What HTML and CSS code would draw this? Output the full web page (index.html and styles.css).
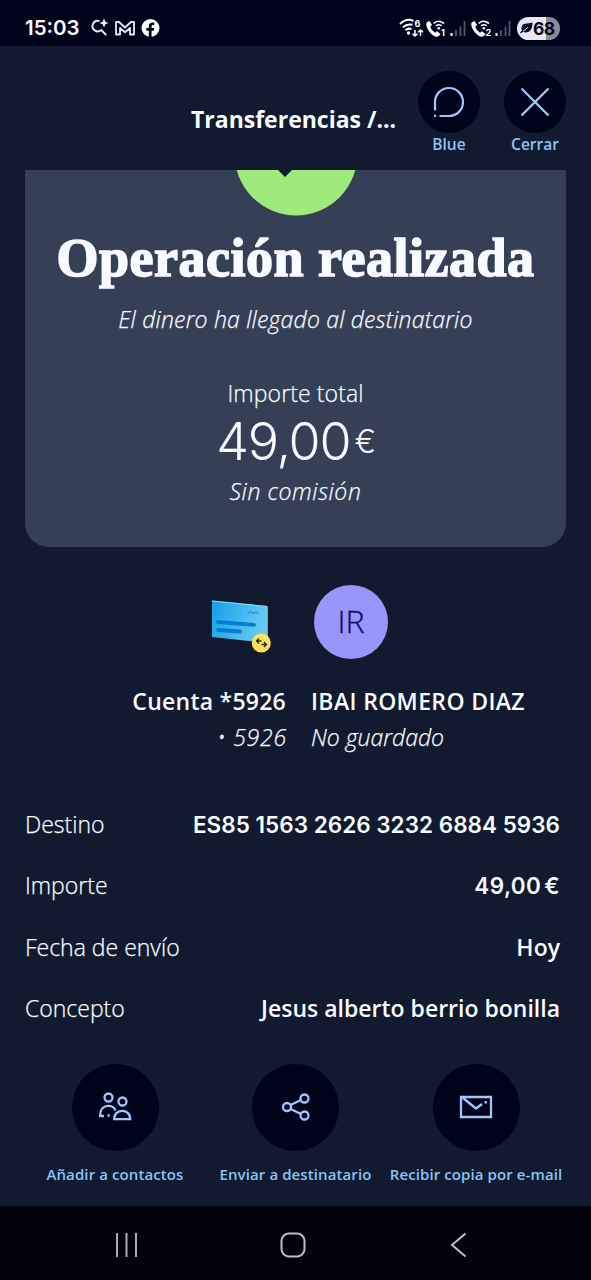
FILE: index.html
```html
<!DOCTYPE html>
<html lang="es">
<head>
<meta charset="utf-8">
<title>Transferencias</title>
<link rel="stylesheet" href="styles.css">
</head>
<body>
<div class="phone">
  <div class="status">
    <span class="clock">15:03</span>
    <svg class="status-left" width="72" height="22" viewBox="0 0 72 22" fill="none">
      <path d="M9.500 4.200a5.200 5.200 0 1 0 1.700 8.800l5 5M4 13.200l2.500 1" stroke="#e9e9f5" stroke-width="1.900"/>
      <path d="M14 1.500l1.300 3.200L18.500 6l-3.200 1.300L14 10.500l-1.300-3.200L9.500 6l3.200-1.300z" fill="#fff"/>
      <path d="M26 17.500V5h3l6 5.500L41 5h3v12.500h-4V11l-5 4.300-5-4.300v6.500z" stroke="#e9e9f5" stroke-width="1.800" stroke-linejoin="round"/>
      <circle cx="60.500" cy="11" r="9" fill="#fff"/>
      <path d="M58.800 20v-6.300h-2.500V11h2.500V9.300c0-2.600 1.400-3.800 3.500-3.800h2V8h-1.200c-1.200 0-1.500.6-1.500 1.500V11h2.600l-.5 2.700h-2.100V20z" fill="#01031b"/>
    </svg>
    <svg class="status-right" width="118" height="24" viewBox="0 0 118 24" fill="none">
      <g stroke="#fff" stroke-width="2">
        <path d="M1 8Q7.500 1.500 14.500 5M4 11.300q4-4 9.500-2.500M6.500 14.200q2.500-2.500 6-1"/>
        <path d="M16 14v6m-2.500-2.300L16 20l2.500-2.300M21.500 20v-6M19 16.300l2.500-2.300 2.500 2.300" stroke-width="1.500"/>
      </g>
      <circle cx="9.500" cy="17" r="1.700" fill="#fff"/>
      <text class="tiny" x="15.500" y="11">6</text>
      <g id="call">
        <path d="M27.500 6.500l3-1.500 2.500 4-1.800 1.800q1.500 4 4.800 6l2-1.600 3.600 2.800-2 2.300Q35.500 22 30.500 16q-4-5.500-3-9.500z" fill="#fff"/>
        <path d="M34.500 7.500q4.500-4.500 10.500 0M37 10q2.800-2.500 5.700 0" stroke="#fff" stroke-width="1.600"/>
        <circle cx="39.800" cy="12.200" r="1.300" fill="#fff"/>
      </g>
      <text class="tiny" x="42" y="20">1</text>
      <path d="M52.500 17v3" stroke="#fff" stroke-width="2"/>
      <path d="M57 14v6M61.500 10.500v9.500M65.500 5v15" stroke="#54566c" stroke-width="1.800"/>
      <use href="#call" x="45"/>
      <text class="tiny" x="86.500" y="20">2</text>
      <path d="M97.500 17v3" stroke="#fff" stroke-width="2"/>
      <path d="M102 14v6M106.500 10.500v9.500M110.500 5v15" stroke="#54566c" stroke-width="1.800"/>
    </svg>
    <div class="battery">
      <svg width="13" height="12" viewBox="0 0 13 12"><path d="M12.500 0.500Q12.500 10 6 10.500q-2 0-3-1L1 11.500 0 10.500 2 8.500Q0 3 5 1.800 9 1.200 12.500 .5z" fill="#05071d"/><path d="M3 9Q6 8 8 5" stroke="#dfe0ef" fill="none"/></svg>
      <span>68</span>
    </div>
  </div>

  <header class="topbar">
    <h1 class="topbar-title">Transferencias /...</h1>
    <div class="tool">
      <div class="tool-disc"><svg width="34" height="34" viewBox="0 0 34 34" fill="none" stroke="#9dc8f8" stroke-width="2.200"><path d="M3 25.500V17a14 14 0 1 1 14 14H7.500"/><path d="M2 30.800h2.200"/></svg></div>
      <span>Blue</span>
    </div>
    <div class="tool tool-close">
      <div class="tool-disc"><svg width="30" height="30" viewBox="0 0 30 30" fill="none" stroke="#9dc8f8" stroke-width="2.300"><path d="M1.500 1.500l27 27M28.500 1.500l-27 27"/></svg></div>
      <span>Cerrar</span>
    </div>
  </header>

  <main>
    <section class="card">
      <svg class="badge" width="124" height="46" viewBox="0 0 124 46"><circle cx="62" cy="-16" r="61.400" fill="#9fe97d"/><path d="M44 0h14l-7 7z" fill="#111a2e"/></svg>
      <h2 class="card-title">Operación realizada</h2>
      <p class="card-note">El dinero ha llegado al destinatario</p>
      <p class="card-label">Importe total</p>
      <p class="amount">49,00<span>€</span></p>
      <p class="card-fee">Sin comisión</p>
    </section>

    <section class="parties">
      <div class="party from">
        <svg class="account" width="62" height="54" viewBox="0 0 62 54">
          <defs><linearGradient id="sky" x1="0" x2="1" y2=".3"><stop stop-color="#159fe5"/><stop offset="1" stop-color="#65cbf5"/></linearGradient></defs>
          <path d="M1 .5L56.500 6v37L1 37z" fill="url(#sky)"/><path d="M1 1l55 5.500v36" fill="none" stroke="#83daf8"/>
          <path d="M7 22l36 2.800M7 30l22 1.500" stroke="#087bd2" stroke-width="3.800" stroke-linecap="round"/>
          <path d="M36 13.500l4-2 2 2 3-1.500 3 1.500" fill="none" stroke="#2498d0" stroke-width="1.300"/>
          <circle cx="50.300" cy="43" r="9.500" fill="#ffe258"/>
          <path d="M50.500 41h-5m2.500-2.500L45.500 41l2.500 2.500M50.500 44.500h5m-2.500-2.500l2.500 2.500-2.500 2.500" fill="none" stroke="#26291f" stroke-width="1.300"/>
        </svg>
        <strong>Cuenta *5926</strong>
        <em>• 5926</em>
      </div>
      <div class="party to">
        <div class="avatar">IR</div>
        <strong>IBAI ROMERO DIAZ</strong>
        <em>No guardado</em>
      </div>
    </section>

    <dl class="details">
      <div><dt>Destino</dt><dd class="iban">ES85 1563 2626 3232 6884 5936</dd></div>
      <div><dt>Importe</dt><dd class="sum">49,00<span>€</span></dd></div>
      <div><dt>Fecha de envío</dt><dd>Hoy</dd></div>
      <div><dt>Concepto</dt><dd>Jesus alberto berrio bonilla</dd></div>
    </dl>

    <nav class="actions">
      <div class="action"><div class="disc"><svg width="34" height="30" viewBox="0 0 34 30" fill="none" stroke="#9dc8f8" stroke-width="2.300"><circle cx="10.500" cy="5.500" r="4"/><circle cx="24.500" cy="9.500" r="4"/><path d="M6 24H2.200v-1C2.200 12.500 14.500 11 17.500 18.500M16.200 27.200h16C32.200 16 16.200 16 16.200 27.200zM9.500 23.500h2.200"/></svg></div><span>Añadir a contactos</span></div>
      <div class="action"><div class="disc"><svg width="30" height="28" viewBox="0 0 30 28" fill="none" stroke="#9dc8f8" stroke-width="2.300"><circle cx="6" cy="14" r="4"/><circle cx="23.500" cy="5.500" r="4"/><circle cx="23.500" cy="22.500" r="4"/><path d="M9.500 12l10.500-5M9.500 16l10.500 5"/></svg></div><span>Enviar a destinatario</span></div>
      <div class="action"><div class="disc"><svg width="34" height="24" viewBox="0 0 34 24" fill="none" stroke="#9dc8f8" stroke-width="2.300"><path d="M2 2h30v20H2zM4 3l13 10.500 6-4.500"/><path d="M25.500 7.300H28"/></svg></div><span>Recibir copia por e-mail</span></div>
    </nav>
  </main>

  <footer class="navbar">
    <svg width="24" height="26" viewBox="0 0 24 26" stroke="#a9aab8" stroke-width="2"><path d="M2 1v24M11.500 1v24M21 1v24"/></svg>
    <svg class="home" width="26" height="26" viewBox="0 0 26 26" fill="none" stroke="#bdbecb" stroke-width="2"><rect x="1.500" y="1.500" width="23" height="23" rx="7.500"/></svg>
    <svg width="17" height="26" viewBox="0 0 17 26" fill="none" stroke="#bdbecb" stroke-width="2"><path d="M15.500 1.500L2 13l13.500 11.500"/></svg>
  </footer>
</div>
</body>
</html>
```
FILE: styles.css
```css
* { box-sizing: border-box; margin: 0; padding: 0; }
body { background: #111a2e; color: #f8fbff; font-family: "Open Sans", "Noto Sans", sans-serif; }
.phone { width: 591px; height: 1280px; display: flex; flex-direction: column; overflow: hidden; white-space: nowrap; }
svg { display: block; flex: none; }

.status { height: 46px; background: #01031b; display: flex; align-items: center; padding: 10px 31px 0 25px; }
.clock { font: 600 20.5px/24px Inter, sans-serif; width: 65px; }
.status-right { margin-left: auto; }
.tiny { font: 700 9px Inter, sans-serif; fill: #fff; }
.battery { width: 43px; height: 23px; border-radius: 12px; background: linear-gradient(90deg, #e6e7f5 68%, #888a99 68%); display: flex; align-items: center; padding-left: 3px; color: #05071d; font: 700 17.5px/23px Inter, sans-serif; letter-spacing: -.5px; }

.topbar { height: 124px; display: flex; align-items: flex-start; padding: 25px 25px 0 191px; }
.topbar-title { width: 227px; font-size: 23px; font-weight: 700; line-height: 48px; margin-top: 24px; }
.tool { width: 62px; display: flex; flex-direction: column; align-items: center; color: #8ac4f6; font-size: 15.5px; font-weight: 600; line-height: 23px; }
.tool-close { margin-left: 24px; }
.tool-disc { width: 62px; height: 62px; border-radius: 50%; background: #01031b; display: grid; place-items: center; }

.card { margin: 0 25px; height: 377px; background: #354057; border-radius: 0 0 24px 24px; display: flex; flex-direction: column; align-items: center; overflow: hidden; }
.card-title { font: 700 54px/60px "Liberation Serif", serif; -webkit-text-stroke: 1.6px #f8fbff; letter-spacing: .5px; margin-top: 12px; }
.card-note, .card-label, .card-fee, .party em, .details dt { font-weight: 300; -webkit-text-stroke: .25px currentColor; }
.card-note, .card-fee { font-size: 23px; font-style: italic; line-height: 32px; letter-spacing: .2px; }
.card-note { margin-top: 15px; }
.card-label { font-size: 23px; line-height: 32px; letter-spacing: .1px; margin-top: 42px; }
.amount { display: flex; font: 300 52px/66px Inter, sans-serif; letter-spacing: -1.2px; }
.amount span { font-size: 32px; line-height: 66px; margin-left: 4px; }
.card-fee { margin-top: 0; letter-spacing: .6px; }

.parties { display: grid; grid-template-columns: 286px 1fr; column-gap: 25px; padding-top: 38px; }
.party { display: flex; flex-direction: column; font-size: 23px; }
.party strong { font-weight: 600; line-height: 32px; letter-spacing: .35px; }
.party em { line-height: 32px; margin-top: 4px; }
.from { align-items: flex-end; }
.from strong { letter-spacing: .25px; }
.from em { letter-spacing: .8px; margin-right: -1px; }
.account { margin: 15px 13px 31px 0; }
.avatar { width: 74px; height: 74px; border-radius: 50%; background: #9895fc; color: #120d61; font-size: 32px; font-weight: 300; -webkit-text-stroke: .3px currentColor; line-height: 72px; text-align: center; margin: 0 0 26px 3px; }

.details { padding: 41px 31px 0 25px; }
.details div { display: flex; justify-content: space-between; height: 61.4px; line-height: 61.4px; font-size: 23px; }
.details dd { font-weight: 600; }
.details .iban { font-family: Inter, sans-serif; font-size: 22.5px; letter-spacing: .02px; }
.details .sum { font-family: Inter, sans-serif; font-size: 22.5px; letter-spacing: .4px; }
.details .sum span { margin-left: 3px; }

.actions { display: grid; grid-template-columns: 180px 181px 180px; padding-left: 25px; margin-top: 24px; }
.action { display: flex; flex-direction: column; align-items: center; color: #8ac4f6; font-size: 15px; font-weight: 600; letter-spacing: .1px; }
.disc { width: 87px; height: 87px; border-radius: 50%; background: #01031b; display: grid; place-items: center; margin-bottom: 12px; }
.action span { line-height: 22px; }

.navbar { margin-top: auto; height: 74px; flex: none; background: #01020d; display: flex; justify-content: space-between; align-items: center; padding: 4px 124px 0 115px; }
.home { margin-right: 4px; }
```
